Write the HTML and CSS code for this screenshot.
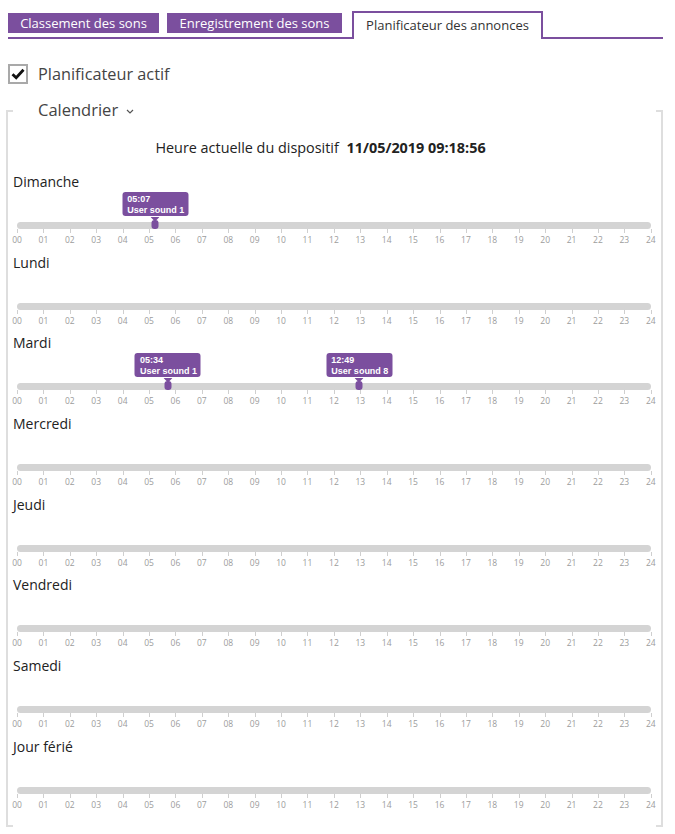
FILE: index.html
```html
<!DOCTYPE html>
<html>
<head>
    <title>Planificateur des annonces</title>
    <link rel="stylesheet" href="styles.css">
</head>
<body>
    <div class="tabs">
        <div class="tab tab-sort">Classement des sons</div>
        <div class="tab tab-record">Enregistrement des sons</div>
        <div class="tab tab-plan active">Planificateur des annonces</div>
    </div>

    <div class="enable-row">
        <span class="checkbox">
            <svg width="16" height="16" viewBox="0 0 16 16"><path d="M2.5 8.2 L6.2 11.8 L13.5 3.8" fill="none" stroke="#111" stroke-width="2.8"/></svg>
        </span>
        <span class="enable-label">Planificateur actif</span>
    </div>

    <div class="calendar">
        <div class="legend">Calendrier
            <svg class="chevron" width="8" height="5" viewBox="0 0 8 5"><polyline points="1,1 4,4 7,1" fill="none" stroke="#555" stroke-width="1.2"/></svg>
        </div>
        <div class="device-time">Heure actuelle du dispositif <b>11/05/2019 09:18:56</b></div>

        <div class="day">
            <div class="day-name">Dimanche</div>
            <div class="track">
                <div class="marker" style="left: 21.8%">
                    <div class="tip">05:07<br>User sound 1</div>
                    <svg width="9" height="12" viewBox="0 0 9 12"><path d="M0 0 H9 L4.5 4.5 Z" fill="#7b4f9e"/><rect x="1" y="3" width="7" height="9" rx="3" fill="#7b4f9e"/></svg>
                </div>
            </div>
            <div class="hours"></div>
        </div>
        <div class="day">
            <div class="day-name">Lundi</div>
            <div class="track"></div>
            <div class="hours"></div>
        </div>
        <div class="day">
            <div class="day-name">Mardi</div>
            <div class="track">
                <div class="marker" style="left: 23.8%">
                    <div class="tip">05:34<br>User sound 1</div>
                    <svg width="9" height="12" viewBox="0 0 9 12"><path d="M0 0 H9 L4.5 4.5 Z" fill="#7b4f9e"/><rect x="1" y="3" width="7" height="9" rx="3" fill="#7b4f9e"/></svg>
                </div>
                <div class="marker" style="left: 54%">
                    <div class="tip">12:49<br>User sound 8</div>
                    <svg width="9" height="12" viewBox="0 0 9 12"><path d="M0 0 H9 L4.5 4.5 Z" fill="#7b4f9e"/><rect x="1" y="3" width="7" height="9" rx="3" fill="#7b4f9e"/></svg>
                </div>
            </div>
            <div class="hours"></div>
        </div>
        <div class="day">
            <div class="day-name">Mercredi</div>
            <div class="track"></div>
            <div class="hours"></div>
        </div>
        <div class="day">
            <div class="day-name">Jeudi</div>
            <div class="track"></div>
            <div class="hours"></div>
        </div>
        <div class="day">
            <div class="day-name">Vendredi</div>
            <div class="track"></div>
            <div class="hours"></div>
        </div>
        <div class="day">
            <div class="day-name">Samedi</div>
            <div class="track"></div>
            <div class="hours"></div>
        </div>
        <div class="day">
            <div class="day-name">Jour férié</div>
            <div class="track"></div>
            <div class="hours"></div>
        </div>
    </div>

    <script type="text/javascript">
        // hour scale 00..24 under every track
        var scales = document.querySelectorAll('.hours');
        for (var i = 0; i < scales.length; i++) {
            for (var h = 0; h <= 24; h++) {
                var span = document.createElement('span');
                span.className = 'hour';
                span.textContent = (h < 10 ? '0' : '') + h;
                scales[i].appendChild(span);
            }
        }
    </script>
</body>
</html>
```

FILE: styles.css
```css
body {
    margin: 0;
    font-family: "Open Sans", Arial, sans-serif;
    color: #222;
    background-color: #fff;
}

.tabs {
    display: flex;
    align-items: flex-end;
    margin: 0 12px 0 8px;
    padding-top: 11px;
    height: 26px;
    border-bottom: 2px solid #7b4f9e;
}

.tab {
    height: 20px;
    line-height: 20px;
    margin-bottom: 4px;
    background-color: #7b4f9e;
    color: #fff;
    font-size: 13px;
    text-align: center;
    white-space: nowrap;
}

.tab-sort {
    width: 151px;
    margin-right: 8px;
}

.tab-record {
    width: 175px;
    margin-right: 10px;
}

.tab.active {
    width: 187px;
    height: 26px;
    line-height: 25px;
    margin-bottom: -2px;
    background-color: #fff;
    color: #333;
    border: 2px solid #7b4f9e;
    border-bottom: none;
}

.enable-row {
    display: flex;
    align-items: center;
    margin: 25px 0 0 8px;
    height: 20px;
}

.checkbox {
    box-sizing: border-box;
    width: 20px;
    height: 20px;
    border: 2px solid #a9a9a9;
    display: flex;
    align-items: center;
    justify-content: center;
}

.enable-label {
    margin-left: 10px;
    font-size: 16.3px;
    color: #444;
}

.calendar {
    display: flow-root;
    position: relative;
    margin: 26px 0 0 6px;
    width: 653px;
    height: 717px;
    border-left: 2px solid #dedede;
    border-right: 2px solid #dedede;
}

.calendar::before,
.calendar::after {
    content: "";
    position: absolute;
    left: -2px;
    right: -2px;
    height: 2px;
    background: linear-gradient(to right, #dedede 7px, transparent 7px, transparent calc(100% - 7px), #dedede calc(100% - 7px));
}

.calendar::before {
    top: 0;
}

.calendar::after {
    bottom: 0;
}

.legend {
    margin-top: -11px;
    padding-left: 30px;
    height: 22px;
    line-height: 22px;
    font-size: 16.5px;
    color: #444;
}

.chevron {
    margin-left: 4px;
    vertical-align: middle;
}

.device-time {
    margin-top: 17px;
    margin-right: 28px;
    line-height: 20px;
    font-size: 14.4px;
    text-align: center;
    color: #222;
}

.device-time b {
    margin-left: 4px;
}

.day {
    height: 80.7px;
    padding-left: 5px;
}

.device-time + .day {
    margin-top: 14px;
}

.day-name {
    line-height: 20px;
    font-size: 14px;
    color: #222;
}

.track {
    position: relative;
    margin: 30px 10px 0 4px;
    height: 7px;
    border-radius: 4px;
    background-color: #d4d4d4;
}

.marker {
    position: absolute;
    bottom: 0;
    width: 9px;
    height: 12px;
    transform: translateX(-50%);
}

.marker svg {
    display: block;
}

.tip {
    position: absolute;
    bottom: 13px;
    left: 50%;
    transform: translateX(-50%);
    box-sizing: border-box;
    width: 66px;
    height: 24px;
    padding: 2px 5px 0;
    border-radius: 3px;
    background-color: #7b4f9e;
    color: #fff;
    font-family: "Liberation Sans", Arial, sans-serif;
    font-weight: bold;
    font-size: 9px;
    line-height: 10.5px;
    white-space: nowrap;
}

.hours {
    display: flex;
    justify-content: space-between;
    margin: 0 10px 0 4px;
}

.hour {
    position: relative;
    width: 0;
    display: flex;
    justify-content: center;
    padding-top: 5px;
    font-size: 8.5px;
    line-height: 12px;
    color: #9c9c9c;
}

.hour::before {
    content: "";
    position: absolute;
    top: 0;
    left: 0;
    width: 1px;
    height: 4px;
    background-color: #cfcfcf;
}
```
